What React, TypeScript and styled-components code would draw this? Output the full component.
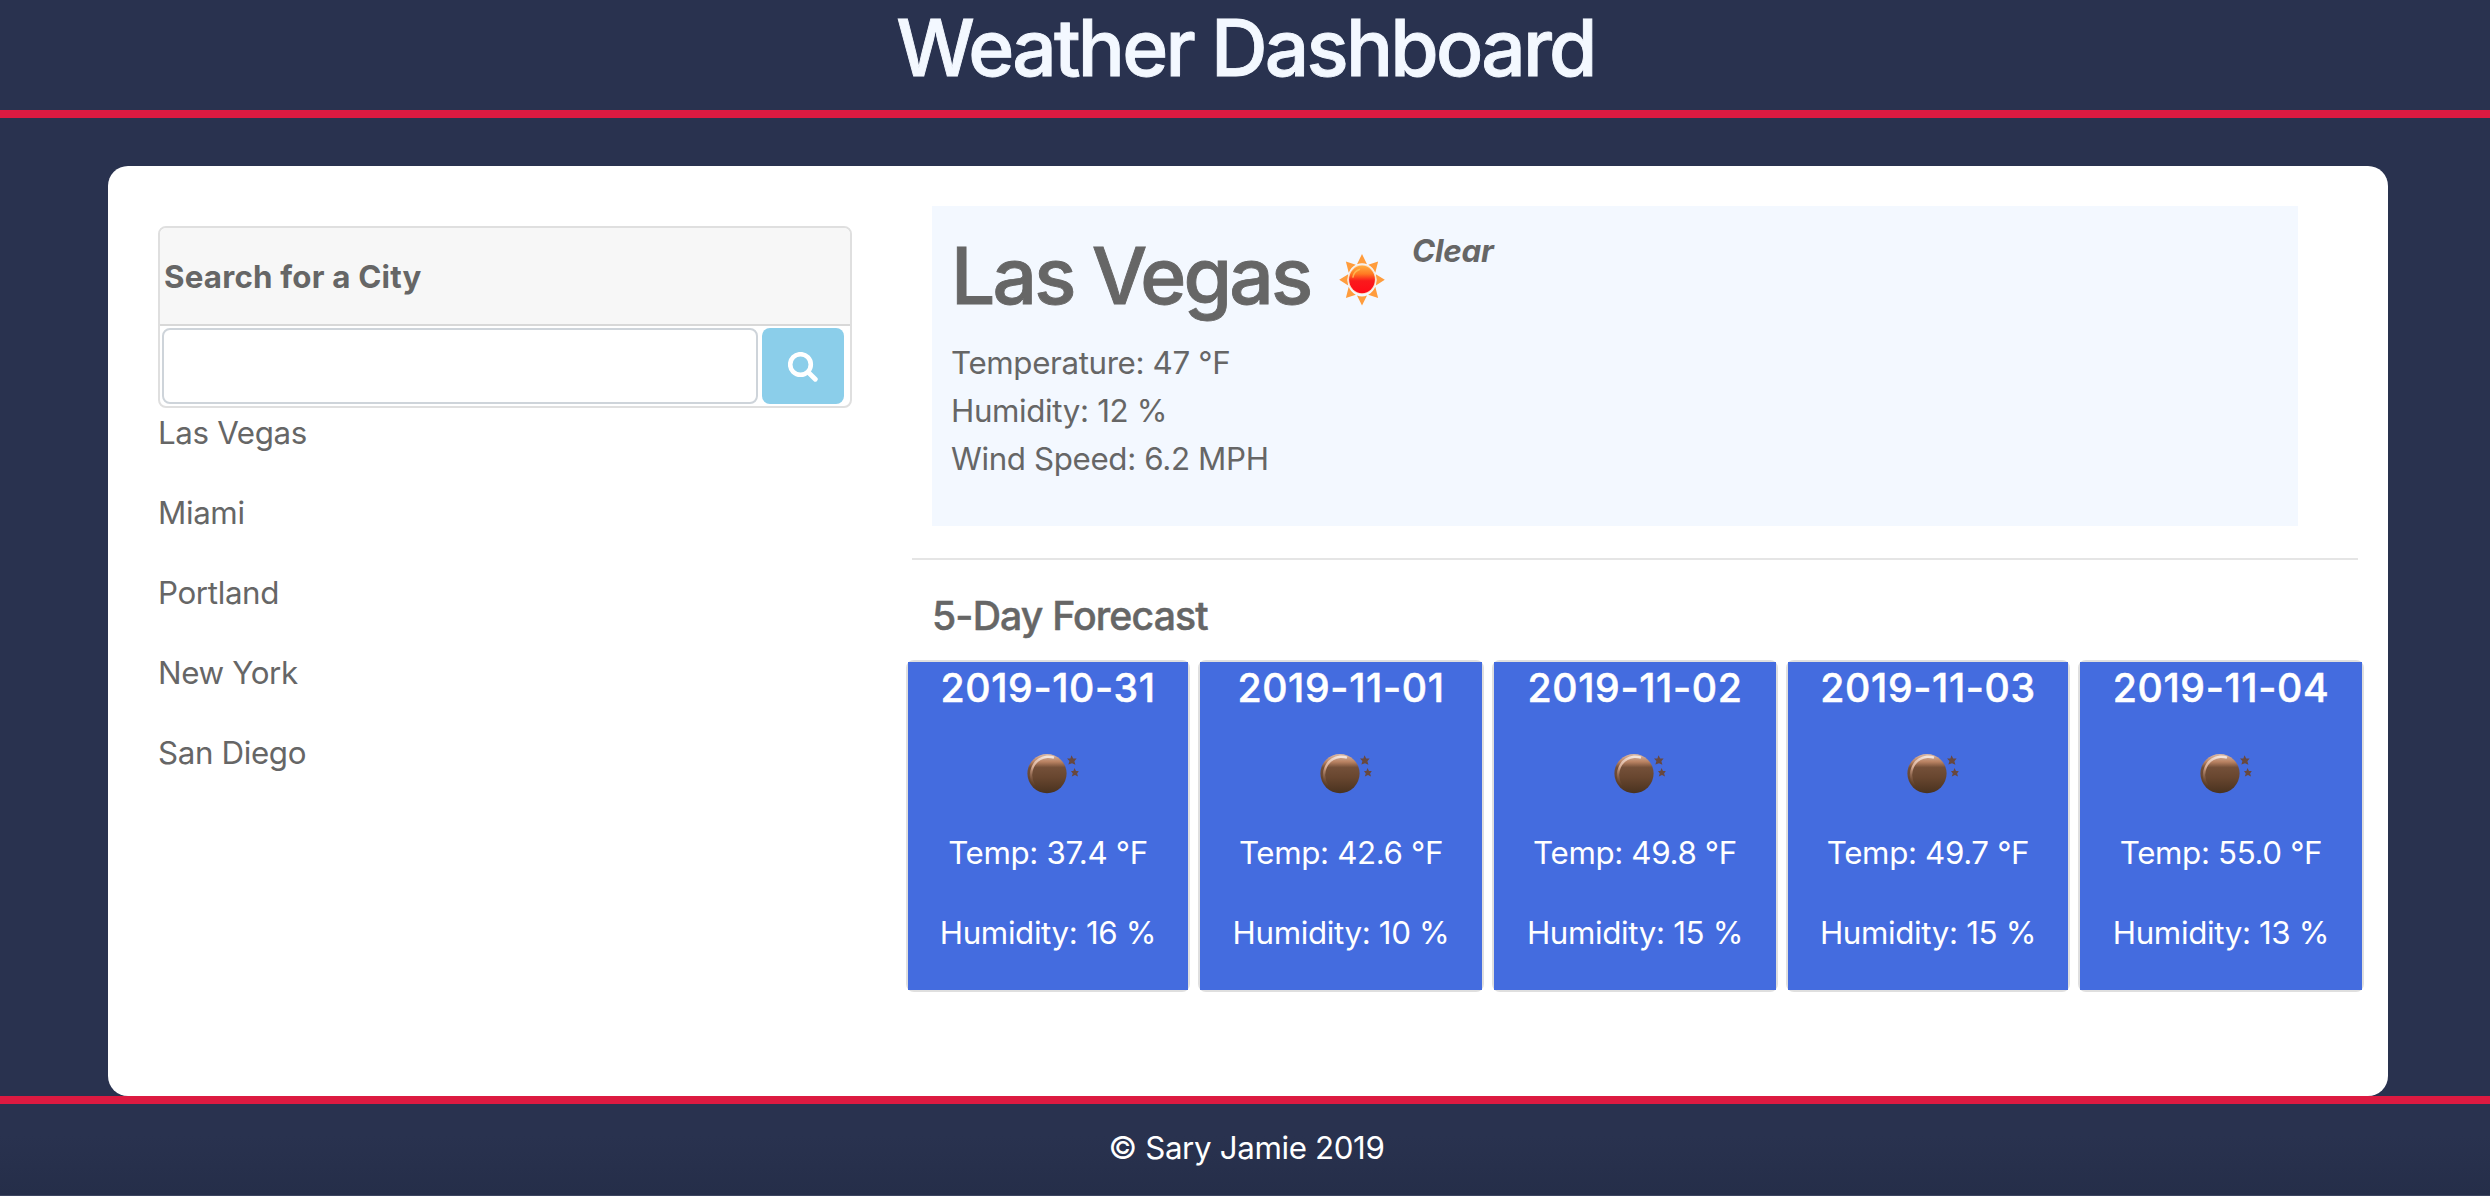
import React from "react";
import styled, { createGlobalStyle } from "styled-components";

const GlobalStyle = createGlobalStyle`
  *, *::before, *::after { box-sizing: border-box; }
  body {
    margin: 0;
    background: #29324f;
    color: #666;
    font-family: Inter, "Liberation Sans", sans-serif;
    font-size: 31.3px;
    line-height: 48px;
    letter-spacing: -0.36px;
  }
  h1, h3, h4, p, ul { margin: 0; padding: 0; }
`;

const Page = styled.div`
  height: 1196px;
  display: flex;
  flex-direction: column;
  overflow: hidden;
`;

const Header = styled.header`
  height: 118px;
  padding-left: 1px;
  border-bottom: 8px solid #dc1a41;
  text-align: center;
`;

const LargeHeading = styled.h1`
  font-size: 78.4px;
  font-weight: 500;
  line-height: 96px;
  letter-spacing: -2.8px;
  -webkit-text-stroke: 0.9px currentColor;
  white-space: nowrap;
`;

const Title = styled(LargeHeading)`
  color: #f3f8ff;
`;

const Panel = styled.main`
  margin: 48px 102px 0 108px;
  height: 930px;
  flex: none;
  display: flex;
  background: #fff;
  border-radius: 20px;
`;

const Sidebar = styled.aside`
  width: 694px;
  margin: 60px 0 0 50px;
  flex: none;
`;

const SearchCard = styled.section`
  height: 182px;
  border: 2px solid #dfdfdf;
  border-radius: 8px;
  overflow: hidden;
`;

const SearchHeading = styled.div`
  height: 98px;
  padding: 25px 4px 23px;
  background: #f7f7f7;
  border-bottom: 2px solid #d8d8d8;
  font-weight: 700;
  letter-spacing: 0.2px;
`;

const SearchRow = styled.form`
  display: flex;
  gap: 4px;
  padding: 2px;
`;

const SearchInput = styled.input`
  width: 596px;
  height: 76px;
  border: 2px solid #ced4da;
  border-radius: 8px;
  font: inherit;
  outline: none;
`;

const SearchButton = styled.button`
  width: 82px;
  height: 76px;
  padding: 2px 0 0;
  border: 0;
  border-radius: 8px;
  background: #8bceea;
  display: flex;
  align-items: center;
  justify-content: center;
`;

const CityList = styled.ul`
  list-style: none;
  padding-top: 1px;
  display: flex;
  flex-direction: column;
  gap: 32px;
`;

const City = styled.li`
  font-weight: 400;
`;

const Content = styled.section`
  flex: 1;
  margin: 40px 24px 0 54px;
`;

const Current = styled.section`
  width: 1366px;
  height: 320px;
  margin-left: 26px;
  padding: 22px 19px;
  background: #f3f8ff;
`;

const CurrentTop = styled.div`
  display: flex;
  height: 111px;
`;

const CityName = styled(LargeHeading)`
  width: 381px;
`;

const CurrentIcon = styled.div`
  flex: none;
  width: 60px;
  padding-top: 21px;
`;

const Condition = styled.em`
  margin: -1px 0 0 20px;
  font-weight: 700;
  line-height: 48px;
  letter-spacing: -0.2px;
`;

const Reading = styled.p`
  font-weight: 400;
`;

const Rule = styled.hr`
  margin: 32px 6px 0;
  border: 0;
  border-top: 2px solid #e5e5e5;
`;

const ForecastTitle = styled.h3`
  margin: 32px 0 20px 26px;
  font-size: 39.2px;
  font-weight: 500;
  line-height: 48px;
  letter-spacing: -0.85px;
  -webkit-text-stroke: 0.5px currentColor;
`;

const Days = styled.div`
  display: grid;
  grid-template-columns: 284px 286px 286px 284px 286px;
  gap: 8px;
`;

const Day = styled.article`
  height: 332px;
  border: 2px solid #dfdfdf;
  border-radius: 8px;
  white-space: nowrap;
`;

const DayBody = styled.div`
  height: 328px;
  padding-top: 2px;
  background: #446cdf;
  color: #fff;
  display: flex;
  flex-direction: column;
  align-items: center;
`;

const DayDate = styled.h4`
  font-size: 39.2px;
  font-weight: 500;
  line-height: 48px;
  height: 64px;
  letter-spacing: 0.65px;
  -webkit-text-stroke: 0.5px currentColor;
`;

const DayIcon = styled.div`
  height: 101px;
  padding: 24px 0 0 15px;
`;

const DayText = styled.p`
  font-weight: 400;
  margin-bottom: 32px;
`;

const Footer = styled.footer`
  flex: 1;
  padding: 20px 0 0 3px;
  border-top: 8px solid #dc1a41;
  border-bottom: 1px solid #3c4460;
  background: linear-gradient(#29324f 35%, #252e49);
  color: #fff;
  text-align: center;
`;

const SearchIcon = () => (
  <svg width="30" height="30" viewBox="0 0 30 30" fill="none" stroke="#fff" strokeLinecap="round">
    <circle cx="12.5" cy="12.5" r="10.3" strokeWidth="4.6" />
    <path d="M20.5 20.5 L27.3 27.3" strokeWidth="4.8" />
  </svg>
);

const rays = [0, 45, 90, 135, 180, 225, 270, 315];

const SunIcon = () => (
  <svg width="60" height="60" viewBox="0 0 60 60" display="block">
    <defs>
      <linearGradient id="sun" x1="0" y1="0" x2="0" y2="1">
        <stop offset="0" stopColor="#ffae42" />
        <stop offset="0.3" stopColor="#ff7a22" />
        <stop offset="0.55" stopColor="#fa1a1c" />
        <stop offset="1" stopColor="#ff0a18" />
      </linearGradient>
    </defs>
    <g transform="translate(30 30.8) scale(1 1.13)">
      {rays.map((a) => (
        <path key={a} d="M0 -22.8 L5 -13.8 Q0 -15.6 -5 -13.8 Z" fill="#ff9c3c" transform={`rotate(${a})`} />
      ))}
    </g>
    <ellipse cx="30" cy="30.4" rx="14" ry="14.8" fill="#fde0c4" />
    <ellipse cx="30" cy="30.4" rx="12.9" ry="13.8" fill="url(#sun)" />
    <path d="M20.8 28.6 A10.4 10.4 0 0 1 28 20.2" stroke="#ffc25a" strokeWidth="1.6" fill="none" opacity="0.8" />
  </svg>
);

const MoonIcon = () => (
  <svg width="60" height="44" viewBox="0 0 60 44" display="block">
    <defs>
      <linearGradient id="moon" x1="0" y1="0" x2="0" y2="1">
        <stop offset="0" stopColor="#d9b8a6" />
        <stop offset="0.2" stopColor="#b98262" />
        <stop offset="0.34" stopColor="#745039" />
        <stop offset="0.6" stopColor="#68462f" />
        <stop offset="1" stopColor="#49321f" />
      </linearGradient>
      <linearGradient id="shine" x1="0.6" y1="0" x2="0.1" y2="1">
        <stop offset="0" stopColor="#f3e3da" />
        <stop offset="0.5" stopColor="#d7ab93" />
        <stop offset="1" stopColor="#8a5d43" stopOpacity="0" />
      </linearGradient>
    </defs>
    <circle cx="21" cy="21.6" r="19.6" fill="url(#moon)" />
    <path d="M8 33.6 C1 21.6 7 6.6 21 4.8 Q25 4.6 28 5.6" stroke="url(#shine)" strokeWidth="2.4" fill="none" />
    <path d="M45.5 3.2 L47.2 6.4 L50.6 6.4 L48.4 9.2 L49.4 12.8 L46 11.2 L42.4 12.6 L43.4 9 L41 6.4 L44.4 6.4 Z" fill="#68483f" />
    <path d="M48.5 16 L50 19 L52.8 19 L51.1 21.4 L52 24.4 L49 23.1 L45.8 24.4 L46.8 21.4 L45 19 L47.4 19 Z" fill="#68483f" />
  </svg>
);

const cities = ["Las Vegas", "Miami", "Portland", "New York", "San Diego"];

const forecast = [
  { date: "2019-10-31", temp: "37.4", humidity: 16 },
  { date: "2019-11-01", temp: "42.6", humidity: 10 },
  { date: "2019-11-02", temp: "49.8", humidity: 15 },
  { date: "2019-11-03", temp: "49.7", humidity: 15 },
  { date: "2019-11-04", temp: "55.0", humidity: 13 },
];

export default function App() {
  return (
    <Page>
      <GlobalStyle />
      <Header>
        <Title>Weather Dashboard</Title>
      </Header>
      <Panel>
        <Sidebar>
          <SearchCard>
            <SearchHeading>Search for a City</SearchHeading>
            <SearchRow>
              <SearchInput aria-label="City" />
              <SearchButton type="button" aria-label="Search"><SearchIcon /></SearchButton>
            </SearchRow>
          </SearchCard>
          <CityList>
            {cities.map((c) => <City key={c}>{c}</City>)}
          </CityList>
        </Sidebar>
        <Content>
          <Current>
            <CurrentTop>
              <CityName>Las Vegas</CityName>
              <CurrentIcon><SunIcon /></CurrentIcon>
              <Condition>Clear</Condition>
            </CurrentTop>
            <Reading>Temperature: 47 °F</Reading>
            <Reading>Humidity: 12 %</Reading>
            <Reading>Wind Speed: 6.2 MPH</Reading>
          </Current>
          <Rule />
          <ForecastTitle>5-Day Forecast</ForecastTitle>
          <Days>
            {forecast.map((d) => (
              <Day key={d.date}>
                <DayBody>
                  <DayDate>{d.date}</DayDate>
                  <DayIcon><MoonIcon /></DayIcon>
                  <DayText>Temp: {d.temp} °F</DayText>
                  <DayText>Humidity: {d.humidity} %</DayText>
                </DayBody>
              </Day>
            ))}
          </Days>
        </Content>
      </Panel>
      <Footer>© Sary Jamie 2019</Footer>
    </Page>
  );
}
